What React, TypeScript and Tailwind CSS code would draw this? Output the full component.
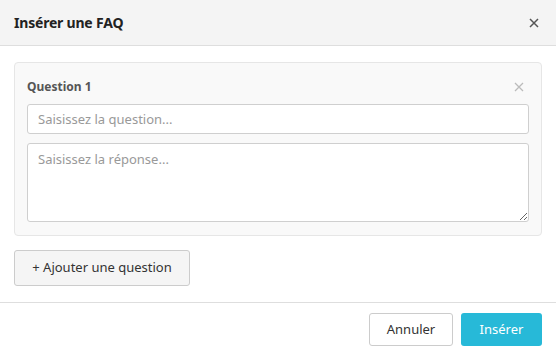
import React from "react";

export default function App() {
  return (
    <div className="w-[556px] h-[356px] bg-white flex flex-col overflow-hidden" style={{ fontFamily: '"Noto Sans", "Liberation Sans", sans-serif' }}>
      <div className="h-[46px] shrink-0 bg-[#f4f4f4] border-b border-[#dedede] flex items-center justify-between pl-[14px] pr-[16px]">
        <div className="text-[14px] font-bold text-[#222] tracking-[-0.2px]">Insérer une FAQ</div>
        <button className="w-[12px] h-[12px] flex items-center justify-center text-[#555]">
          <svg width="10" height="10" viewBox="0 0 10 10" fill="none" stroke="currentColor" strokeWidth="1.5">
            <path d="M1 1L9 9M9 1L1 9" />
          </svg>
        </button>
      </div>
      <div className="px-[14px] pt-[16px] pb-[16px] flex flex-col">
        <div className="bg-[#f9f9f9] border border-[#e6e6e6] rounded-[4px] px-[12px] pt-[15px] pb-[13px] flex flex-col">
          <div className="flex items-center justify-between h-[18px] mb-[8px]">
            <div className="text-[12px] font-bold text-[#555]">Question 1</div>
            <button className="w-[12px] h-[12px] flex items-center justify-center text-[#bbb] mr-[4px]">
              <svg width="10" height="10" viewBox="0 0 10 10" fill="none" stroke="currentColor" strokeWidth="1.3">
                <path d="M1 1L9 9M9 1L1 9" />
              </svg>
            </button>
          </div>
          <input
            className="h-[30px] w-full bg-white border border-[#cfcfcf] rounded-[3px] px-[10px] text-[13px] text-[#333] placeholder:text-[#999] outline-none"
            placeholder="Saisissez la question..."
          />
          <textarea
            className="mt-[9px] h-[79px] w-full bg-white border border-[#cfcfcf] rounded-[3px] px-[10px] py-[6px] text-[13px] text-[#333] placeholder:text-[#999] outline-none resize-y block"
            placeholder="Saisissez la réponse..."
          />
        </div>
        <div className="mt-[14px]">
          <button className="h-[36px] w-[176px] bg-[#f5f5f5] border border-[#cccccc] rounded-[3px] text-[13px] text-[#333]">
            + Ajouter une question
          </button>
        </div>
      </div>
      <div className="border-t border-[#dedede] flex justify-end gap-[8px] pt-[10px] pr-[14px]">
        <button className="h-[33px] w-[84px] bg-white border border-[#cccccc] rounded-[3px] text-[13px] text-[#333]">
          Annuler
        </button>
        <button className="h-[33px] w-[81px] bg-[#27b9d8] rounded-[3px] text-[13px] text-white">
          Insérer
        </button>
      </div>
    </div>
  );
}
